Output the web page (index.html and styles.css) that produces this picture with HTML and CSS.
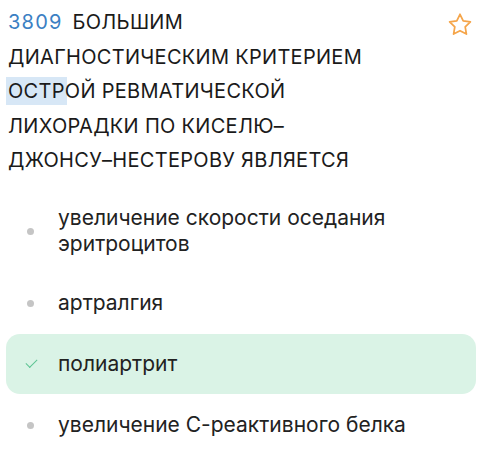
FILE: index.html
```html
<!DOCTYPE html>
<html lang="ru">
<head>
  <meta charset="UTF-8">
  <meta name="viewport" content="width=device-width, initial-scale=1.0">
  <title>Вопрос 3809</title>
  <link rel="stylesheet" href="styles.css">
</head>
<body>
  <div class="question">
    <div class="question-head">
      <div class="question-text"><span class="question-num">3809</span>большим диагностическим критерием <span class="mark">остр</span>ой ревматической лихорадки по Киселю–<wbr>Джонсу–<wbr>Нестерову является</div>
      <button class="fav" aria-label="В избранное">
        <svg width="28" height="28" viewBox="0 0 24 24" fill="none" stroke="#f5a54a" stroke-width="1.5" stroke-linejoin="round">
          <path d="M12 2.8l2.75 5.6 6.15.9-4.45 4.35 1.05 6.15L12 16.9l-5.5 2.9 1.05-6.15L3.1 9.3l6.15-.9z"/>
        </svg>
      </button>
    </div>

    <ul class="answers">
      <li class="answer">увеличение скорости оседания эритроцитов</li>
      <li class="answer">артралгия</li>
      <li class="answer correct">полиартрит</li>
      <li class="answer">увеличение С-реактивного белка</li>
    </ul>
  </div>
</body>
</html>
```

FILE: styles.css
```css
body {
  margin: 0;
  font-family: Inter, "Noto Sans", sans-serif;
  color: #1a1a1a;
  background-color: #fff;
}
.question {
  padding: 5px 6px 0 6px;
}
.question-head {
  display: flex;
  align-items: flex-start;
}
.question-text {
  flex: 1;
  max-width: 376px;
  padding-left: 2px;
  font-size: 20px;
  line-height: 34.5px;
  text-transform: uppercase;
  letter-spacing: 0.3px;
}
.question-num {
  color: #3b80c3;
  letter-spacing: 1.2px;
  margin-right: 10px;
}
/* выделение части слова */
.mark {
  background-color: #d7e7f6;
  box-shadow: 0 0 0 2px #d7e7f6;
}
.fav {
  margin-left: auto;
  margin-top: 6px;
  margin-right: 2px;
  padding: 0;
  border: none;
  background: none;
  cursor: pointer;
}
.answers {
  list-style: none;
  margin: 12px 0 0 0;
  padding: 0;
}
.answer {
  position: relative;
  padding: 15px 20px 15px 52px;
  margin-bottom: 3px;
  font-size: 21px;
  line-height: 26px;
  color: #222;
  border-radius: 14px;
}
.answer::before {
  content: "";
  position: absolute;
  left: 21px;
  top: 50%;
  width: 7px;
  height: 7px;
  margin-top: -3px;
  border-radius: 50%;
  background-color: #c5c5c5;
}
.answer.correct {
  background-color: #daf3e6;
  padding-top: 17px;
  padding-bottom: 17px;
}
.answer.correct::before {
  left: 20px;
  width: 10px;
  height: 5px;
  margin-top: -5px;
  border-radius: 0;
  background: none;
  border-left: 1.5px solid #5cc493;
  border-bottom: 1.5px solid #5cc493;
  transform: rotate(-45deg);
}
```
